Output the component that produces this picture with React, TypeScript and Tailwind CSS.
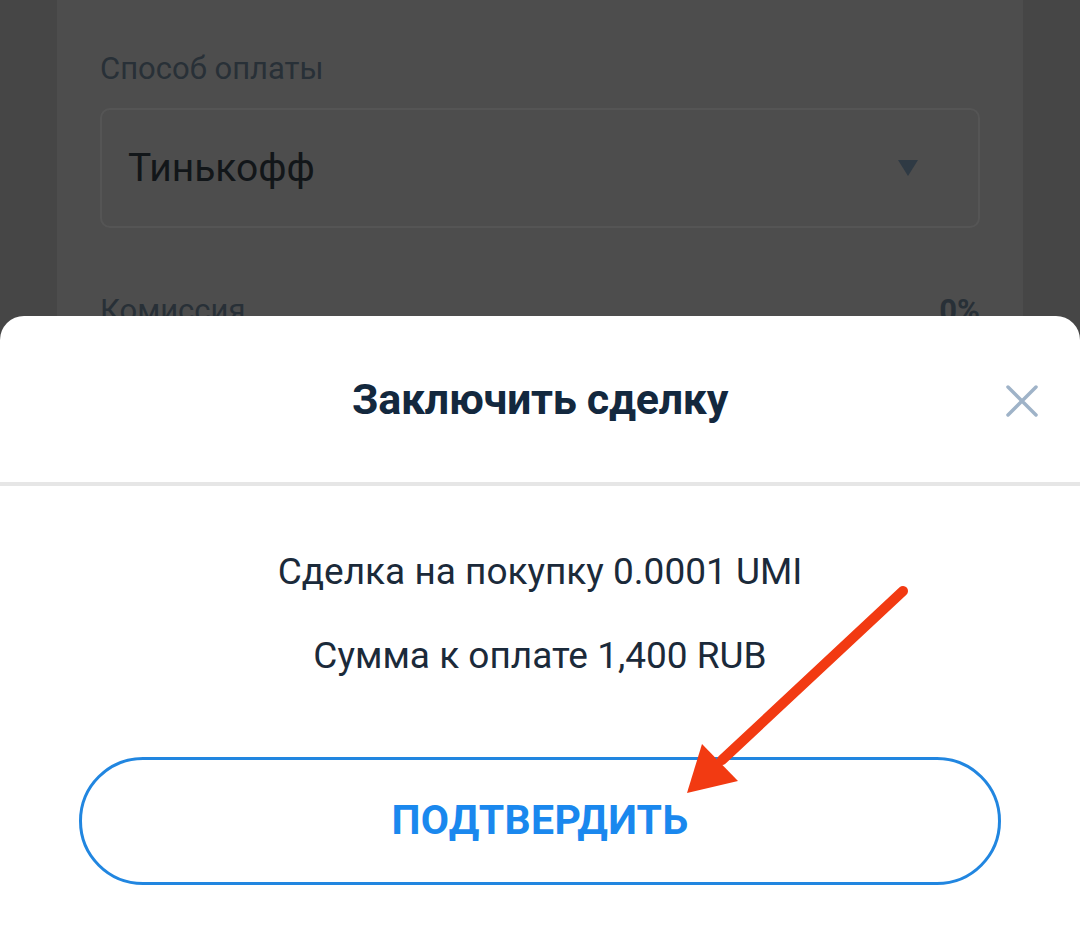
export default function App() {
  return (
    <div
      className="relative w-[1080px] h-[929px] overflow-hidden bg-[#464646] flex flex-col"
      style={{ fontFamily: "Roboto, 'Noto Sans', sans-serif" }}
    >
      {/* Dimmed form behind the sheet */}
      <div className="h-[316px] shrink-0 px-[57px] overflow-hidden">
        <div className="h-full bg-[#4d4d4d] px-[43px] pt-[50px]">
          <div className="text-[31px] leading-[38px] text-[#283037]">Способ оплаты</div>
          <div className="mt-[20px] h-[120px] rounded-[10px] border-2 border-[#555555] flex items-center justify-between pl-[26px] pr-[60px]">
            <span className="text-[39px] text-[#121619]">Тинькофф</span>
            <svg width="20" height="16" viewBox="0 0 20 16">
              <path d="M0 0 H20 L10 16 Z" fill="#2f3a44" />
            </svg>
          </div>
          <div className="mt-[64px] flex justify-between items-center text-[31px] leading-[38px] text-[#283037]">
            <span>Комиссия</span>
            <span className="font-bold">0%</span>
          </div>
        </div>
      </div>

      {/* Bottom sheet */}
      <div className="flex-1 bg-white rounded-t-[24px] flex flex-col">
        <div className="relative h-[166px] shrink-0 flex items-center justify-center">
          <h2 className="text-[43px] font-bold text-[#13283e] tracking-[-0.3px]">Заключить сделку</h2>
          <button className="absolute right-[40px] top-[67px] w-[36px] h-[36px] flex items-center justify-center">
            <svg width="34" height="34" viewBox="0 0 34 34">
              <path d="M3 3 L31 31 M31 3 L3 31" stroke="#9fb3c8" strokeWidth="3.5" strokeLinecap="round" />
            </svg>
          </button>
        </div>
        <div className="h-[4px] bg-[#e6e6e6] shrink-0" />
        <div className="flex flex-col items-center pt-[64px] text-[#1b2a3a]">
          <p className="text-[37px] leading-[44px]">Сделка на покупку 0.0001 UMI</p>
          <p className="mt-[40px] text-[37px] leading-[44px]">Сумма к оплате 1,400 RUB</p>
        </div>
        <div className="mx-[79px] mt-[79px] h-[128px] rounded-full border-[3px] border-[#2186e0] flex items-center justify-center">
          <span className="text-[41px] font-bold text-[#1a88ee] tracking-[0.3px]">ПОДТВЕРДИТЬ</span>
        </div>
      </div>

      {/* Red annotation arrow */}
      <svg className="absolute left-0 top-0 pointer-events-none" width="1080" height="929" viewBox="0 0 1080 929">
        <line x1="903" y1="591" x2="722" y2="760" stroke="#f23a12" strokeWidth="10" strokeLinecap="round" />
        <path d="M687 793 L702 744 L738 781 Z" fill="#f23a12" />
      </svg>
    </div>
  );
}
